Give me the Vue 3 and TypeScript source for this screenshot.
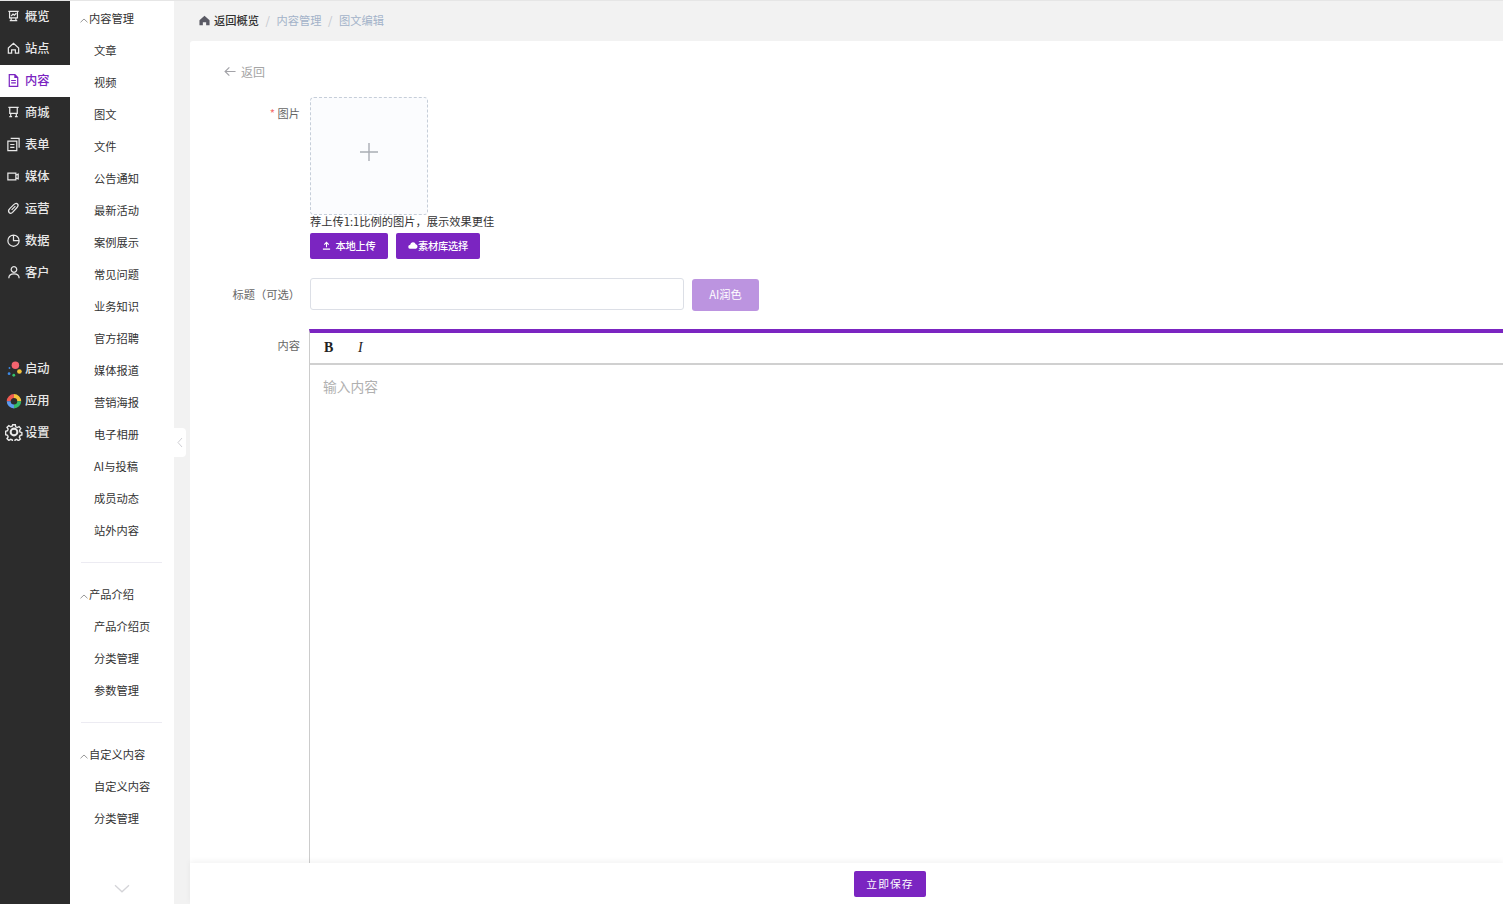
<script setup lang="ts">
interface RailItem { label: string; paths: string[]; active?: boolean }
const railTop: RailItem[] = [
  { label: '概览', paths: ['M2.500 2.500h11M3.800 2.500v7h8.400v-7M5.500 7.500l2-2 1.500 1.200L11 4.500M5.500 9.500v3M10.500 9.500v3M4 12.500h8'] },
  { label: '站点', paths: ['M2.500 7.500 8 2.500l5.500 5V13h-3.500V9.500H6V13H2.500z'] },
  { label: '内容', active: true, paths: ['M3.500 1.800h6l3 3v9.400h-9zM9.500 1.800v3h3M5.500 8h5M5.500 10.500h5'] },
  { label: '商城', paths: ['M2.500 2.500h11M4 2.500v6.500h8V2.500M5 9v3.500M11 9v3.500M3.500 12.500h3M9.500 12.500h3'] },
  { label: '表单', paths: ['M5 1.500h9v10M2 4.500h9.500v10H2zM4.500 8h4.500M4.500 11h4.500'] },
  { label: '媒体', paths: ['M2 4.500h8.500v7H2zM10.500 6.500l2.500-1v5l-2.500-1'] },
  { label: '运营', paths: ['M3.500 12.500c-1.500-1.500-.8-3 .5-4.300l4.300-4.300c1.300-1.300 3-1.700 4-.7s.5 2.700-.8 4L7 12.200c-1.200 1.200-2.500 1.300-3.500.3zM6 9.500l4-4'] },
  { label: '数据', paths: ['M8 2.200a6 6 0 1 0 6 6 6 6 0 0 0-6-6zM8 2.200V8.200h6'] },
  { label: '客户', paths: ['M8.500 1.800a3 3 0 1 1-.01 0M3 14c0-3 2.500-4.500 5.500-4.500S14 11 14 14'] },
]
const sections = [
  { title: '内容管理', items: ['文章', '视频', '图文', '文件', '公告通知', '最新活动', '案例展示', '常见问题', '业务知识', '官方招聘', '媒体报道', '营销海报', '电子相册', 'AI与投稿', '成员动态', '站外内容'] },
  { title: '产品介绍', items: ['产品介绍页', '分类管理', '参数管理'] },
  { title: '自定义内容', items: ['自定义内容', '分类管理'] },
]
</script>

<template>
  <div class="page">
    <div class="topline"></div>
    <div class="shell">
      <nav class="rail">
        <a v-for="r in railTop" :key="r.label" class="rail-item" :class="{ active: r.active }">
          <svg class="ico" viewBox="0 0 16 16" fill="none" stroke="currentColor" stroke-width="1.300">
            <path v-for="d in r.paths" :key="d" :d="d" />
          </svg>
          <span>{{ r.label }}</span>
        </a>
        <div class="rail-gap"></div>
        <a class="rail-item">
          <svg class="ico free" viewBox="0 0 16 16">
            <circle cx="10" cy="4.500" r="4" fill="#f4646f" />
            <circle cx="14.300" cy="11.200" r="2.500" fill="#f5c33b" />
            <circle cx="8.300" cy="15.200" r="1.500" fill="#35c46a" />
            <circle cx="3.300" cy="13.500" r="1.500" fill="#3d8be8" />
            <circle cx="3.700" cy="7.500" r="1" fill="#3d8be8" />
          </svg>
          <span>启动</span>
        </a>
        <a class="rail-item">
          <svg class="ico free" viewBox="0 0 16 16" fill="none" stroke-width="4.200">
            <path d="M2.900 8.800A5.600 5.600 0 0 1 8.500 3.200" stroke="#ef5b52" />
            <path d="M8.500 3.200A5.600 5.600 0 0 1 14.100 8.800" stroke="#f5c33b" />
            <path d="M14.100 8.800A5.600 5.600 0 0 1 8.500 14.400" stroke="#35b96a" />
            <path d="M8.500 14.400A5.600 5.600 0 0 1 2.900 8.800" stroke="#5b9bf0" />
          </svg>
          <span>应用</span>
        </a>
        <a class="rail-item">
          <svg class="ico gear" viewBox="0 0 16 16" fill="none" stroke="currentColor" stroke-width="1.400">
            <path d="M6.700.9h2.600l.4 2 1.500.7 1.800-1 1.700 2-1.200 1.700.4 1.600 1.900.8v2.200l-1.900.7-.6 1.600 1 1.800-1.900 1.500-1.700-1.200-1.500.5-.6 2H6.700l-.5-2-1.500-.6-1.800 1.100-1.800-1.800 1.100-1.700-.6-1.600-1.900-.6V7.400l1.900-.7.600-1.500-1.100-1.800 1.800-1.700 1.800 1.100 1.500-.6z" transform="translate(.8 .8) scale(.9)" />
            <circle cx="8" cy="8" r="3" stroke-width="1.800" />
          </svg>
          <span>设置</span>
        </a>
      </nav>

      <aside class="sub">
        <div class="sub-body">
          <section v-for="(s, i) in sections" :key="s.title" class="sub-sec" :class="{ first: i === 0 }">
            <h4 class="sub-head">
              <svg class="caret" viewBox="0 0 8 5" fill="none" stroke="#999" stroke-width="1"><path d="M.5 4.300 4 1l3.500 3.300" /></svg>
              {{ s.title }}
            </h4>
            <a v-for="it in s.items" :key="it" class="sub-item">{{ it }}</a>
          </section>
        </div>
        <svg class="sub-more" viewBox="0 0 16 9" fill="none" stroke="#d4d4d8" stroke-width="1.300"><path d="M1 1.200 8 7.800l7-6.600" /></svg>
      </aside>

      <div class="gutter">
        <button class="handle" type="button" aria-label="收起">
          <svg viewBox="0 0 6 11" fill="none" stroke="#cfcfd4" stroke-width="1"><path d="M5 1 1 5.500 5 10" /></svg>
        </button>
      </div>

      <main class="main">
        <header class="crumbs">
          <svg class="home" viewBox="0 0 12 12" fill="#5a5a64"><path d="M6 .8.500 5.800v5.400h3.700V7.800h3.600v3.400h3.700V5.800z" /></svg>
          <b>返回概览</b>
          <i>/</i>
          <span>内容管理</span>
          <i>/</i>
          <span>图文编辑</span>
        </header>
        <div class="card">
          <div class="back">
            <svg viewBox="0 0 13 11" fill="none" stroke="#a3a3a8" stroke-width="1.300"><path d="M12.500 5.500H1.200M5.800 1 1.200 5.500 5.800 10" /></svg>
            返回
          </div>
          <div class="row image-row">
            <label class="lab"><em>*</em> 图片</label>
            <div class="ctl">
              <div class="upload">
                <svg viewBox="0 0 18 18" stroke="#a9adb4" stroke-width="1.400"><path d="M9 0v18M0 9h18" /></svg>
              </div>
              <p class="hint">荐上传1:1比例的图片，展示效果更佳</p>
              <div class="btns">
                <button class="btn local" type="button">
                  <svg viewBox="0 0 10 10" fill="none" stroke="#fff" stroke-width="1.200"><path d="M1 9h8M5 7V1.500M2.500 4 5 1.500 7.500 4" /></svg>
                  本地上传
                </button>
                <button class="btn lib" type="button">
                  <svg viewBox="0 0 12 10" fill="#fff"><path d="M3 9a2.500 2.500 0 0 1-.4-5A3.500 3.500 0 0 1 9.300 3.400 2.900 2.900 0 0 1 9.300 9z" /></svg>素材库选择
                </button>
              </div>
            </div>
          </div>
          <div class="row title-row">
            <label class="lab title-lab">标题（可选）</label>
            <input class="title-input" type="text" />
            <button class="ai" type="button">AI润色</button>
          </div>
          <div class="row editor-row">
            <label class="lab">内容</label>
            <div class="editor">
              <div class="toolbar"><b>B</b><i>I</i></div>
              <div class="placeholder">输入内容</div>
            </div>
          </div>
        </div>
        <footer class="foot"><button class="save" type="button">立即保存</button></footer>
      </main>
    </div>
  </div>
</template>

<style>
html, body { margin: 0; height: 100%; overflow: hidden; background: #f2f2f2; }
</style>

<style scoped>
* { box-sizing: border-box; }
.page {
  width: 1503px; height: 904px; display: flex; flex-direction: column; overflow: hidden;
  font-family: "Noto Sans CJK SC", "Liberation Sans", sans-serif; font-size: 11.250px; color: #333; background: #f2f2f2;
}
.topline { height: 1px; background: #e6e6e6; flex: none; }
.shell { flex: 1; display: flex; min-height: 0; }
.rail { width: 70px; background: #2c2c2c; flex: none; display: flex; flex-direction: column; }
.rail-item { height: 32px; display: flex; align-items: center; padding: 0 0 2px 6px; gap: 4px; color: #e8e8e8; font-size: 12.250px; font-weight: 500; flex: none; }
.rail-item.active { background: #fff; color: #7b25c1; }
.ico { width: 15px; height: 15px; flex: none; }
.free { overflow: visible; }
.gear { width: 18px; height: 18px; margin-left: -1px; margin-right: -2px; }
.rail-gap { height: 64px; flex: none; }
.sub { width: 104px; background: #fff; flex: none; display: flex; flex-direction: column; }
.sub-body { padding: 2px 12px 0 11px; }
.sub-sec { border-top: 1px solid #ecebf2; padding-top: 16px; padding-bottom: 16px; }
.sub-sec.first { border-top: 0; padding-top: 0; }
.sub-head { margin: 0 0 0 -1px; height: 31px; padding-bottom: 1px; display: flex; align-items: center; font-weight: 400; font-size: 11.250px; color: #333; }
.caret { width: 8px; height: 5px; margin-right: 1px; margin-top: 4px; flex: none; }
.sub-item { display: flex; align-items: center; height: 32px; padding: 0 0 1px 13px; color: #333; }
.sub-more { width: 16px; height: 9px; margin: 34px 0 0 44px; flex: none; }
.gutter { width: 16px; flex: none; display: flex; align-items: flex-start; }
.handle { margin-top: 427px; width: 12px; height: 29px; padding: 0; border: 0; background: #fff; border-radius: 0 4px 4px 0; display: flex; align-items: center; justify-content: center; }
.handle svg { width: 6px; height: 11px; }
.main { flex: 1; min-width: 0; display: flex; flex-direction: column; position: relative; }
.crumbs { height: 40px; flex: none; display: flex; align-items: center; padding: 0 0 2px 9px; color: #a3b2c9; }
.crumbs b { font-weight: 500; color: #333; }
.crumbs i { font-style: normal; margin: 0 6.500px; color: #c2c6cc; }
.home { width: 11px; height: 11px; margin-right: 4px; }
.card { flex: 1; background: #fff; border-radius: 3px 0 0 0; display: flex; flex-direction: column; min-height: 0; overflow: hidden; padding-top: 21px; }
.back { height: 18px; padding-left: 34px; display: flex; align-items: center; gap: 5px; color: #a5a5a5; font-size: 12px; flex: none; }
.back svg { width: 12px; height: 11px; margin-top: 1px; }
.row { display: flex; flex: none; }
.lab { width: 110px; flex: none; text-align: right; color: #666; }
.lab em { color: #f56c6c; font-style: normal; }
.image-row { margin-top: 17px; }
.image-row .lab { padding-top: 7px; line-height: 18px; }
.ctl { margin-left: 10px; }
.upload { width: 118px; height: 118px; background: #fbfcfe; border: 1px dashed #c6ced9; border-radius: 4px; display: flex; align-items: center; justify-content: center; padding-bottom: 8px; }
.upload svg { width: 18px; height: 18px; }
.hint { margin: 0; height: 18px; line-height: 12px; color: #333; white-space: nowrap; }
.btns { display: flex; gap: 8px; }
.btn { height: 26px; border: 0; border-radius: 2px; background: #7b25c1; color: #fff; font: inherit; font-size: 10.250px; font-weight: 500; display: flex; align-items: center; justify-content: center; padding: 0 0 2px; letter-spacing: -.25px; }
.btn.local { width: 78px; gap: 4px; }
.btn.local svg { width: 9px; height: 9px; margin-top: 1px; }
.btn.lib { width: 84px; gap: 0; }
.btn.lib svg { width: 10px; height: 9px; margin-top: 1px; }
.title-row { margin-top: 19px; align-items: flex-start; }
.title-lab { width: 110px; padding-top: 7px; margin-right: 10px; line-height: 18px; }
.title-input { width: 374px; height: 32px; border: 1px solid #dcdfe6; border-radius: 3px; background: #fff; outline: none; padding: 0 8px; }
.ai { margin: 1px 0 0 8px; width: 67px; height: 32px; border: 0; border-radius: 3px; background: #bc94e0; color: #fff; font: inherit; padding: 0 0 2px; }
.editor-row { margin-top: 18px; flex: 1; min-height: 0; }
.editor-row .lab { padding-top: 7px; line-height: 18px; }
.editor { margin-left: 9px; flex: 1; border-left: 1px solid #ccc; border-top: 4px solid #7b25c1; display: flex; flex-direction: column; height: 560px; }
.toolbar { height: 32px; border-bottom: 2px solid #d0d0d0; display: flex; align-items: center; padding-left: 14px; gap: 25px; font-family: "Liberation Serif", serif; font-size: 14px; color: #222; }
.toolbar b, .toolbar i { width: 9px; }
.placeholder { padding: 11px 13px; font-size: 13.750px; line-height: 20px; color: #b0b0b0; }
.foot { position: absolute; left: 0; right: 0; bottom: 0; height: 41px; background: #fff; box-shadow: 0 -2px 6px rgba(0, 0, 0, .05); display: flex; justify-content: center; align-items: flex-start; padding: 8px 0 0 87px; }
.save { width: 72px; height: 26px; border: 0; border-radius: 2px; background: #7b25c1; color: #fff; font: inherit; font-size: 10.750px; letter-spacing: 1.100px; padding: 0 0 2px; }
</style>
